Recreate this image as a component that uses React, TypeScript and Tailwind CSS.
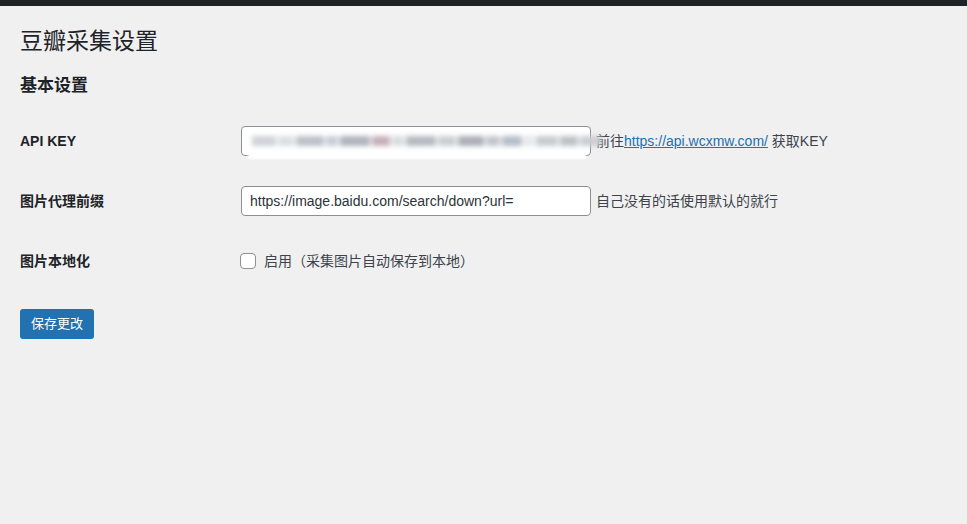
const font = "font-['Liberation_Sans','Noto_Sans_CJK_SC',sans-serif]";

const blurBlocks = [
  ["w-[24px]", "bg-[#cfd2d7]"],
  ["w-[16px]", "bg-[#dcdee1]"],
  ["w-[28px]", "bg-[#bcc0c7]"],
  ["w-[12px]", "bg-[#c5cdd8]"],
  ["w-[30px]", "bg-[#b0b3bb]"],
  ["w-[18px]", "bg-[#c4b0b6]"],
  ["w-[12px]", "bg-[#dadbde]"],
  ["w-[30px]", "bg-[#b6b9c0]"],
  ["w-[18px]", "bg-[#cbcdd1]"],
  ["w-[26px]", "bg-[#abaeb7]"],
  ["w-[14px]", "bg-[#c3c5ca]"],
  ["w-[20px]", "bg-[#b4bdc8]"],
  ["w-[10px]", "bg-[#e6e7e9]"],
  ["w-[22px]", "bg-[#c8cacf]"],
  ["w-[18px]", "bg-[#bec0c5]"],
  ["w-[22px]", "bg-[#cbcdd1]"],
];

function Row({ label, children }: { label: string; children: React.ReactNode }) {
  return (
    <div className="flex items-center py-[15px]">
      <div className="w-[221px] shrink-0 text-[14px] font-semibold text-[#1d2327]">{label}</div>
      <div className="flex h-[30px] items-center">{children}</div>
    </div>
  );
}

export default function App() {
  return (
    <div className={`${font} min-h-[524px] bg-[#f0f0f1] text-[14px] text-[#3c434a]`}>
      <div className="h-[6px] bg-[#1d2327]" />
      <div className="pl-[20px]">
        <h1 className="mt-[20px] text-[23px] font-normal leading-[30px] text-[#1d2327]">豆瓣采集设置</h1>
        <h2 className="mt-[19px] text-[17px] font-semibold leading-[22px] text-[#1d2327]">基本设置</h2>
        <div className="mt-[14px]">
          <Row label="API KEY">
            <div className="relative h-[30px] w-[350px] rounded-[4px] border border-[#8c8f94] bg-white">
              <div className="absolute left-[6px] right-[4px] top-[2px] bottom-[-4px] bg-white blur-[1px]" />
              <div className="absolute left-[10px] top-[9px] flex gap-[2px] blur-[2.5px]">
                {blurBlocks.map(([w, c], i) => (
                  <span key={i} className={`h-[10px] ${w} ${c}`} />
                ))}
              </div>
            </div>
            <span className="ml-[5px] text-[#3c434a]">
              前往
              <a href="#" className="text-[#2271b1] underline">https://api.wcxmw.com/</a> 获取KEY
            </span>
          </Row>
          <Row label="图片代理前缀">
            <input
              defaultValue="https://image.baidu.com/search/down?url="
              className="h-[30px] w-[350px] rounded-[4px] border border-[#8c8f94] bg-white px-[8px] text-[14px] text-[#2c3338] outline-none"
            />
            <span className="ml-[5px]">自己没有的话使用默认的就行</span>
          </Row>
          <Row label="图片本地化">
            <label className="flex items-center">
              <span className="ml-[-1px] h-[16px] w-[16px] rounded-[4px] border border-[#8c8f94] bg-white" />
              <span className="ml-[8px]">启用（采集图片自动保存到本地）</span>
            </label>
          </Row>
        </div>
        <button className="mt-[18px] h-[30px] rounded-[3px] bg-[#2271b1] px-[11px] text-[13px] leading-[28px] text-white">
          保存更改
        </button>
      </div>
    </div>
  );
}
